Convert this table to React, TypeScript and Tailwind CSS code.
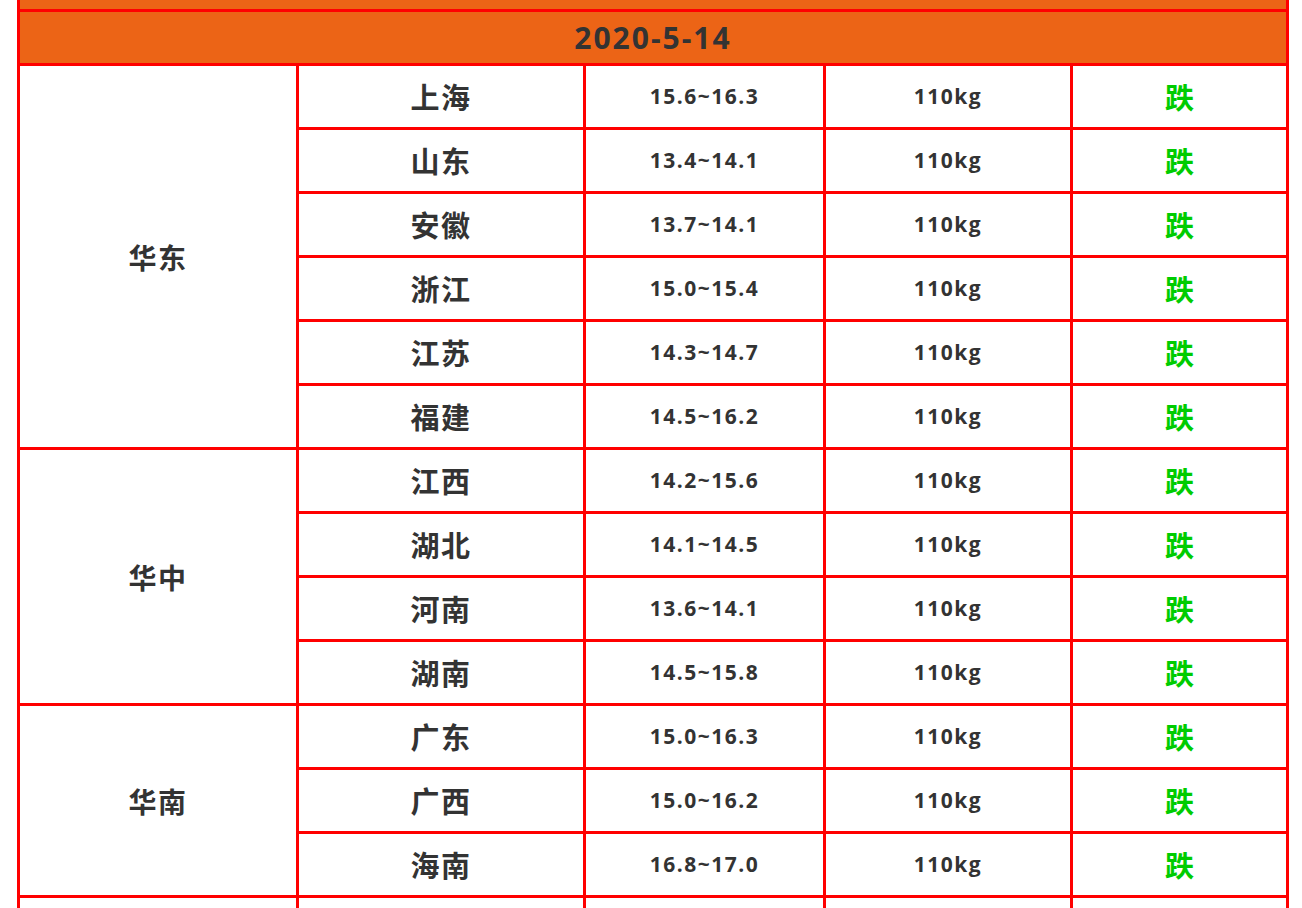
const groups = [
  {
    region: "华东",
    rows: [
      ["上海", "15.6~16.3"],
      ["山东", "13.4~14.1"],
      ["安徽", "13.7~14.1"],
      ["浙江", "15.0~15.4"],
      ["江苏", "14.3~14.7"],
      ["福建", "14.5~16.2"],
    ],
  },
  {
    region: "华中",
    rows: [
      ["江西", "14.2~15.6"],
      ["湖北", "14.1~14.5"],
      ["河南", "13.6~14.1"],
      ["湖南", "14.5~15.8"],
    ],
  },
  {
    region: "华南",
    rows: [
      ["广东", "15.0~16.3"],
      ["广西", "15.0~16.2"],
      ["海南", "16.8~17.0"],
    ],
  },
];

const spans: Record<number, string> = {
  3: "row-span-3",
  4: "row-span-4",
  6: "row-span-6",
};

const cell = "flex items-center justify-center bg-white";

export default function App() {
  return (
    <div
      className="min-h-screen bg-white text-[#333]"
      style={{ fontFamily: '"Open Sans", "Noto Sans CJK SC", sans-serif' }}
    >
      <div className="ml-[17px] w-[1272px] bg-[#ff0000] px-[3px] pb-[3px]">
        <div className="grid grid-cols-[276px_284px_237px_244px_213px] grid-rows-[9px_51px] auto-rows-[61px] gap-[3px]">
          {/* previous day, cut off */}
          <div className="col-span-5 bg-[#ec6416]" />

          {/* date header */}
          <div className="col-span-5 flex items-center justify-center bg-[#ec6416] text-[30px] font-bold tracking-[2px]">
            2020-5-14
          </div>

          {groups.map((g) => (
            <>
              <div
                key={g.region}
                className={`${cell} ${spans[g.rows.length]} pt-[3px] text-[28px] font-bold tracking-[1.5px]`}
              >
                {g.region}
              </div>
              {g.rows.map(([city, price]) => (
                <>
                  <div key={city} className={`${cell} pt-[3px] text-[29px] font-bold tracking-[1.5px]`}>
                    {city}
                  </div>
                  <div className={`${cell} text-[21px] font-bold tracking-[1.5px]`}>
                    {price}
                  </div>
                  <div className={`${cell} text-[21px] font-bold tracking-[1.5px]`}>
                    110kg
                  </div>
                  <div className={`${cell} pt-[3px] text-[29px] font-bold text-[#00cc00]`}>
                    跌
                  </div>
                </>
              ))}
            </>
          ))}

          {/* next region, below the fold */}
          <div className="bg-white" />
          <div className="bg-white" />
          <div className="bg-white" />
          <div className="bg-white" />
          <div className="bg-white" />
        </div>
      </div>
    </div>
  );
}
